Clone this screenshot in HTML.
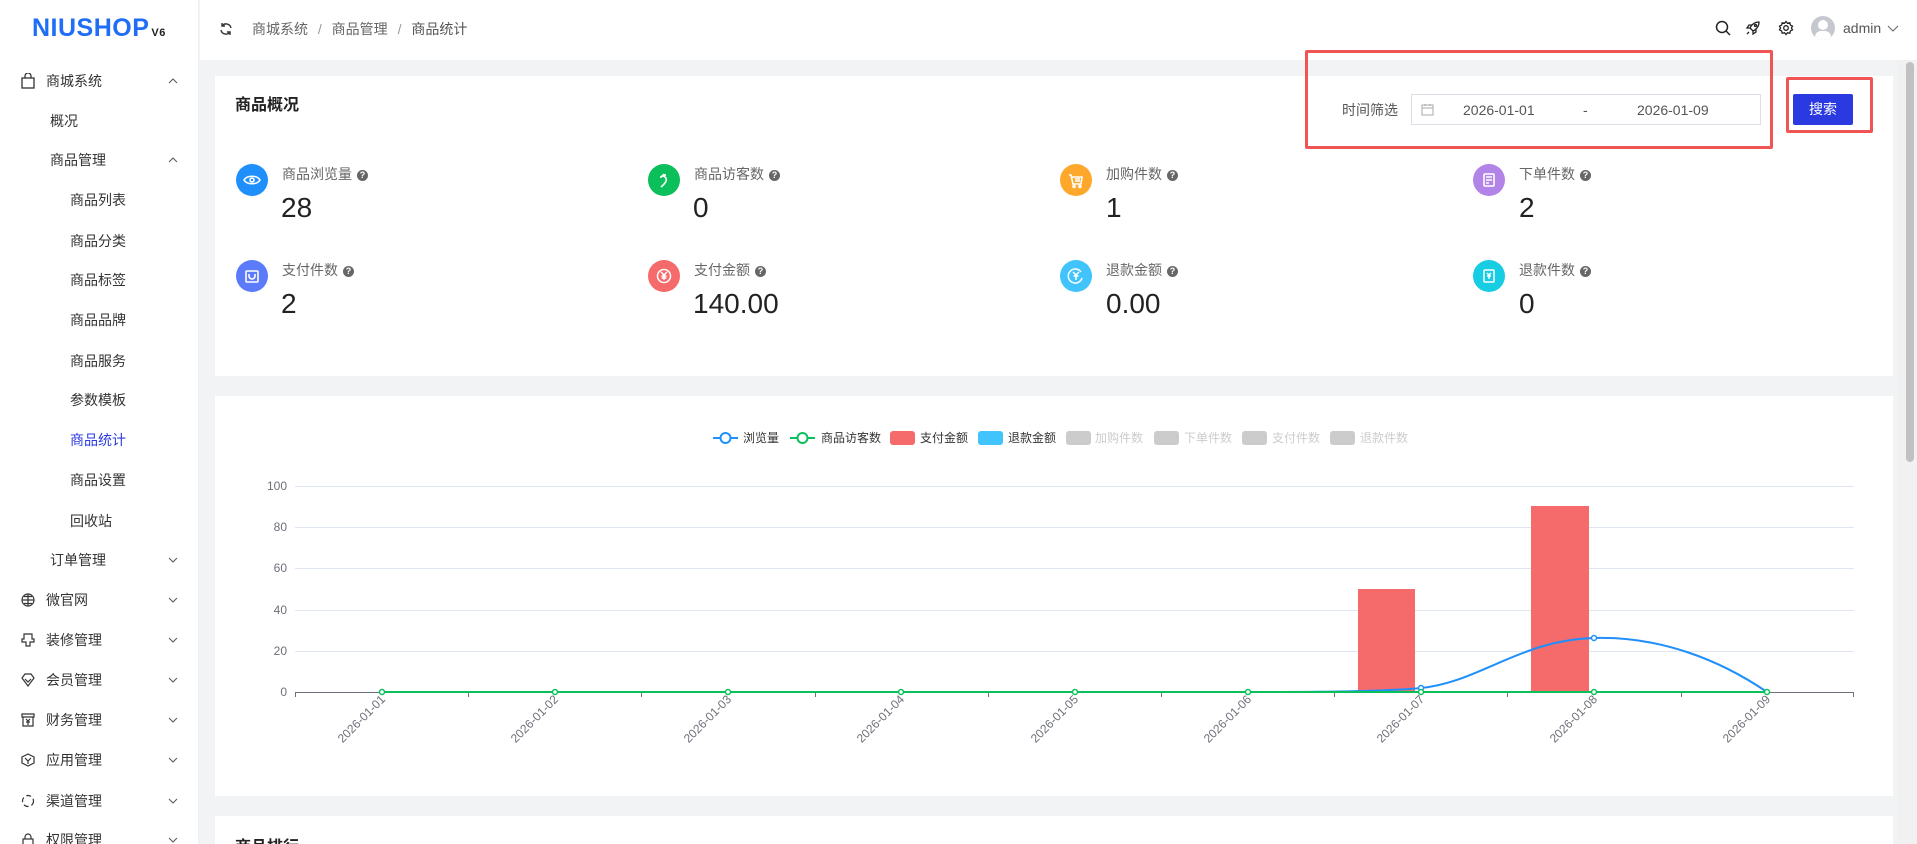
<!DOCTYPE html>
<html style="overflow:hidden"><head><meta charset="utf-8">
<style>
*{margin:0;padding:0;box-sizing:border-box}
html,body{overflow:hidden}
body{width:1917px;height:844px;background:#f2f3f5;font-family:"Liberation Sans","Noto Sans CJK SC",sans-serif;position:relative;color:#333}
.a{position:absolute}
#side{left:0;top:0;width:199px;height:844px;background:#fff;border-right:1px solid #eef0f4}
.logo{left:32px;top:14px;font-size:25px;font-weight:bold;color:#1f6ef5;letter-spacing:0.5px}
.logo small{font-size:11px;color:#222;font-weight:bold;margin-left:2px}
.mi{position:absolute;font-size:14px;color:#333;line-height:20px;white-space:nowrap}
.arr{position:absolute;left:168px;width:10px;height:10px}
#hdr{left:200px;top:0;width:1717px;height:60px;background:#fff}
.card{position:absolute;background:#fff;left:215px;width:1678px}
.lab{font-size:14px;color:#666;line-height:20px;white-space:nowrap}
.q{display:inline-block;width:11px;height:11px;border-radius:50%;background:#666;color:#fff;font-size:9px;line-height:11px;text-align:center;font-weight:bold;margin-left:5px;vertical-align:1px}
.num{font-size:28px;color:#222;line-height:32px}
.ic{position:absolute;width:32px;height:32px;border-radius:50%}
.lg{position:absolute;top:430px;font-size:12px;color:#333;line-height:16px;white-space:nowrap}
.lg.off{color:#ccc}
</style></head><body>
<div id="side" class="a">
<div class="a logo">NIUSHOP<small>V6</small></div>
<svg class="a" style="left:21px;top:73px" width="14" height="16" viewBox="0 0 14 16" fill="none" stroke="#333" stroke-width="1.3"><rect x="1" y="5" width="12" height="10"/><path d="M4 5V3a3 3 0 0 1 6 0v2"/></svg>
<div class="mi" style="left:46px;top:71px">商城系统</div>
<svg class="arr" style="top:76px" viewBox="0 0 10 10"><path d="M1 7l4-4 4 4" fill="none" stroke="#555" stroke-width="1"/></svg>
<div class="mi" style="left:50px;top:111px">概况</div>
<div class="mi" style="left:50px;top:150px">商品管理</div>
<svg class="arr" style="top:155px" viewBox="0 0 10 10"><path d="M1 7l4-4 4 4" fill="none" stroke="#555" stroke-width="1"/></svg>
<div class="mi" style="left:70px;top:190px">商品列表</div>
<div class="mi" style="left:70px;top:231px">商品分类</div>
<div class="mi" style="left:70px;top:270px">商品标签</div>
<div class="mi" style="left:70px;top:310px">商品品牌</div>
<div class="mi" style="left:70px;top:351px">商品服务</div>
<div class="mi" style="left:70px;top:390px">参数模板</div>
<div class="mi" style="left:70px;top:430px;color:#2a3ae0">商品统计</div>
<div class="mi" style="left:70px;top:470px">商品设置</div>
<div class="mi" style="left:70px;top:511px">回收站</div>
<div class="mi" style="left:50px;top:550px">订单管理</div>
<svg class="arr" style="top:555px" viewBox="0 0 10 10"><path d="M1 3l4 4 4-4" fill="none" stroke="#555" stroke-width="1"/></svg>

<svg class="a" style="left:21px;top:593px" width="14" height="14" viewBox="0 0 14 14" fill="none" stroke="#333" stroke-width="1.2"><circle cx="7" cy="7" r="6"/><path d="M1 7h12M7 1v12M3 3.5h8M3 10.5h8"/></svg>
<div class="mi" style="left:46px;top:590px">微官网</div>
<svg class="arr" style="top:595px" viewBox="0 0 10 10"><path d="M1 3l4 4 4-4" fill="none" stroke="#555" stroke-width="1"/></svg>
<svg class="a" style="left:21px;top:633px" width="14" height="14" viewBox="0 0 14 14" fill="none" stroke="#333" stroke-width="1.2"><path d="M3 1h8v5h2v3H9v4H5V9H1V6h2z"/></svg>
<div class="mi" style="left:46px;top:630px">装修管理</div>
<svg class="arr" style="top:635px" viewBox="0 0 10 10"><path d="M1 3l4 4 4-4" fill="none" stroke="#555" stroke-width="1"/></svg>
<svg class="a" style="left:21px;top:673px" width="14" height="14" viewBox="0 0 14 14" fill="none" stroke="#333" stroke-width="1.2"><path d="M1 5l3-4h6l3 4-6 8z"/><path d="M4 6l3 3 3-3"/></svg>
<div class="mi" style="left:46px;top:670px">会员管理</div>
<svg class="arr" style="top:675px" viewBox="0 0 10 10"><path d="M1 3l4 4 4-4" fill="none" stroke="#555" stroke-width="1"/></svg>
<svg class="a" style="left:21px;top:713px" width="14" height="14" viewBox="0 0 14 14" fill="none" stroke="#333" stroke-width="1.2"><path d="M1 1h12v3H1zM2 4v9h10V4M5 6l2 2 2-2M7 8v4M5 9h4"/></svg>
<div class="mi" style="left:46px;top:710px">财务管理</div>
<svg class="arr" style="top:715px" viewBox="0 0 10 10"><path d="M1 3l4 4 4-4" fill="none" stroke="#555" stroke-width="1"/></svg>
<svg class="a" style="left:21px;top:753px" width="14" height="14" viewBox="0 0 14 14" fill="none" stroke="#333" stroke-width="1.2"><path d="M7 1l6 3v6l-6 3-6-3V4z"/><path d="M4 5l3 3 3-3M7 8v3"/></svg>
<div class="mi" style="left:46px;top:750px">应用管理</div>
<svg class="arr" style="top:755px" viewBox="0 0 10 10"><path d="M1 3l4 4 4-4" fill="none" stroke="#555" stroke-width="1"/></svg>
<svg class="a" style="left:21px;top:794px" width="14" height="14" viewBox="0 0 14 14" fill="none" stroke="#333" stroke-width="1.2"><circle cx="7" cy="7" r="5.5" stroke-dasharray="5 3"/></svg>
<div class="mi" style="left:46px;top:791px">渠道管理</div>
<svg class="arr" style="top:796px" viewBox="0 0 10 10"><path d="M1 3l4 4 4-4" fill="none" stroke="#555" stroke-width="1"/></svg>
<svg class="a" style="left:21px;top:833px" width="14" height="14" viewBox="0 0 14 14" fill="none" stroke="#333" stroke-width="1.2"><rect x="2" y="6" width="10" height="7"/><path d="M4 6V4a3 3 0 0 1 6 0v2"/></svg>
<div class="mi" style="left:46px;top:830px">权限管理</div>
<svg class="arr" style="top:835px" viewBox="0 0 10 10"><path d="M1 3l4 4 4-4" fill="none" stroke="#555" stroke-width="1"/></svg>
</div>

<div id="hdr" class="a"></div>
<svg class="a" style="left:219px;top:22px" width="14" height="14" viewBox="0 0 14 14" fill="none" stroke="#333" stroke-width="1.4"><path d="M12 6A5 5 0 0 0 3 4M2 8a5 5 0 0 0 9 2"/><path d="M3 1v3h3M11 13v-3H8"/></svg>
<div class="a" style="left:252px;top:19px;font-size:14px;color:#666;line-height:20px;white-space:nowrap">商城系统 <span style="color:#999;margin:0 6px">/</span> 商品管理 <span style="color:#999;margin:0 6px">/</span> <span style="color:#555">商品统计</span></div>
<svg class="a" style="left:1715px;top:20px" width="16" height="16" viewBox="0 0 16 16" fill="none" stroke="#222" stroke-width="1.5"><circle cx="7" cy="7" r="5.5"/><path d="M11 11l4 4"/></svg>
<svg class="a" style="left:1745px;top:20px" width="16" height="16" viewBox="0 0 16 16" fill="none" stroke="#222" stroke-width="1.3"><path d="M14 2c-4 0-7 2-9 6l3 3c4-2 6-5 6-9zM5 8H2l2-3h3M8 11v3l3-2V9M4 12l-2 2"/><circle cx="10.5" cy="5.5" r="1"/></svg>
<svg class="a" style="left:1778px;top:20px" width="16" height="16" viewBox="0 0 16 16" fill="none" stroke="#222" stroke-width="1.3"><circle cx="8" cy="8" r="2.3"/><path d="M8 1.5l1.5 1.8 2.3-.5.6 2.3 2.1 1L13.4 8l1.1 1.9-2.1 1-.6 2.3-2.3-.5L8 14.5l-1.5-1.8-2.3.5-.6-2.3-2.1-1L2.6 8 1.5 6.1l2.1-1 .6-2.3 2.3.5z"/></svg>
<div class="a" style="left:1811px;top:16px;width:24px;height:24px;border-radius:50%;background:#c5c8ce;overflow:hidden"><div class="a" style="left:7px;top:4px;width:10px;height:10px;border-radius:50%;background:#fff"></div><div class="a" style="left:4px;top:15px;width:16px;height:12px;border-radius:6px 6px 0 0;background:#fff"></div></div>
<div class="a" style="left:1843px;top:18px;font-size:14px;color:#555;line-height:20px">admin</div>
<svg class="a" style="left:1887px;top:23px" width="12" height="10" viewBox="0 0 12 10"><path d="M1 3l5 5 5-5" fill="none" stroke="#666" stroke-width="1"/></svg>
<div class="a" style="left:1897px;top:60px;width:20px;height:784px;background:#f1f1f1"></div>
<div class="a" style="left:1906px;top:62px;width:8px;height:400px;background:#c1c1c1;border-radius:4px"></div>

<!-- card 1 -->
<div class="card" style="top:76px;height:300px"></div>
<div class="a" style="left:235px;top:96px;font-size:16px;font-weight:bold;color:#222;line-height:20px">商品概况</div>
<div class="a lab" style="left:1342px;top:100px;color:#555">时间筛选</div>
<div class="a" style="left:1411px;top:94px;width:350px;height:31px;border:1px solid #dcdfe6;background:#fff"></div>
<svg class="a" style="left:1421px;top:103px" width="13" height="13" viewBox="0 0 13 13" fill="none" stroke="#aaa" stroke-width="1"><rect x="1" y="2" width="11" height="10"/><path d="M1 5h11M4 1v2M9 1v2"/></svg>
<div class="a" style="left:1463px;top:100px;font-size:14px;color:#555;line-height:20px">2026-01-01</div>
<div class="a" style="left:1583px;top:100px;font-size:14px;color:#555;line-height:20px">-</div>
<div class="a" style="left:1637px;top:100px;font-size:14px;color:#555;line-height:20px">2026-01-09</div>
<div class="a" style="left:1793px;top:94px;width:60px;height:31px;background:#2a3ae0;border-radius:2px;color:#fff;font-size:14px;line-height:31px;text-align:center">搜索</div>
<div class="a" style="left:1305px;top:50px;width:468px;height:99px;border:3px solid #f05454;border-radius:2px"></div>
<div class="a" style="left:1786px;top:77px;width:87px;height:56px;border:3px solid #f05454;border-radius:2px"></div>

<!-- stats -->
<div class="ic" style="left:236px;top:164px;background:#1e8ffb"><svg width="32" height="32" viewBox="0 0 32 32" fill="none" stroke="#fff" stroke-width="1.6"><path d="M8 16c3-5 13-5 16 0-3 5-13 5-16 0z"/><circle cx="16" cy="16" r="2"/></svg></div>
<div class="a lab" style="left:282px;top:164px">商品浏览量<span class="q">?</span></div>
<div class="a num" style="left:281px;top:192px">28</div>
<div class="ic" style="left:648px;top:164px;background:#0bc05a"><svg width="32" height="32" viewBox="0 0 32 32" fill="none" stroke="#fff" stroke-width="1.6"><path d="M13 12c4 0 6 2 5 5-1 3-4 5-5 6M13 12v2M15 10l1 2M17 10l0 2"/></svg></div>
<div class="a lab" style="left:694px;top:164px">商品访客数<span class="q">?</span></div>
<div class="a num" style="left:693px;top:192px">0</div>
<div class="ic" style="left:1060px;top:164px;background:#fda82b"><svg width="32" height="32" viewBox="0 0 32 32" fill="none" stroke="#fff" stroke-width="1.6"><path d="M9 11h2l2 9h8l1-7H12M15 15h5M15 17h5"/><circle cx="14" cy="22.5" r="1"/><circle cx="20" cy="22.5" r="1"/></svg></div>
<div class="a lab" style="left:1106px;top:164px">加购件数<span class="q">?</span></div>
<div class="a num" style="left:1106px;top:192px">1</div>
<div class="ic" style="left:1473px;top:164px;background:#b384e8"><svg width="32" height="32" viewBox="0 0 32 32" fill="none" stroke="#fff" stroke-width="1.6"><rect x="11" y="10" width="10" height="12" rx="1"/><path d="M13 13h6M13 16h6M13 19h3"/></svg></div>
<div class="a lab" style="left:1519px;top:164px">下单件数<span class="q">?</span></div>
<div class="a num" style="left:1519px;top:192px">2</div>

<div class="ic" style="left:236px;top:260px;background:#5b7bfb"><svg width="32" height="32" viewBox="0 0 32 32" fill="none" stroke="#fff" stroke-width="1.6"><rect x="10" y="11" width="12" height="11" rx="1"/><path d="M13 14v2a3 3 0 0 0 6 0v-2"/></svg></div>
<div class="a lab" style="left:282px;top:260px">支付件数<span class="q">?</span></div>
<div class="a num" style="left:281px;top:288px">2</div>
<div class="ic" style="left:648px;top:260px;background:#f56b6b"><svg width="32" height="32" viewBox="0 0 32 32" fill="none" stroke="#fff" stroke-width="1.5"><circle cx="16" cy="16" r="6.5"/><path d="M13 12l3 3 3-3M16 15v5M13.5 16h5M13.5 18h5"/></svg></div>
<div class="a lab" style="left:694px;top:260px">支付金额<span class="q">?</span></div>
<div class="a num" style="left:693px;top:288px">140.00</div>
<div class="ic" style="left:1060px;top:260px;background:#41c3fb"><svg width="32" height="32" viewBox="0 0 32 32" fill="none" stroke="#fff" stroke-width="1.5"><path d="M21 12a7 7 0 1 0 1 6"/><path d="M13 12l3 3 3-3M16 15v5M13.5 16h5"/></svg></div>
<div class="a lab" style="left:1106px;top:260px">退款金额<span class="q">?</span></div>
<div class="a num" style="left:1106px;top:288px">0.00</div>
<div class="ic" style="left:1473px;top:260px;background:#16cde3"><svg width="32" height="32" viewBox="0 0 32 32" fill="none" stroke="#fff" stroke-width="1.5"><rect x="11" y="10" width="10" height="12" rx="1"/><path d="M14 13l2 2 2-2M16 15v4M14 16h4"/></svg></div>
<div class="a lab" style="left:1519px;top:260px">退款件数<span class="q">?</span></div>
<div class="a num" style="left:1519px;top:288px">0</div>

<!-- card 2 chart -->
<div class="card" style="top:396px;height:400px"></div>
<svg class="a" style="left:713px;top:431px" width="25" height="14"><path d="M0 7h25" stroke="#1e8ffb" stroke-width="2"/><circle cx="12.5" cy="7" r="5" fill="#fff" stroke="#1e8ffb" stroke-width="2"/></svg>
<div class="lg" style="left:743px">浏览量</div>
<svg class="a" style="left:790px;top:431px" width="25" height="14"><path d="M0 7h25" stroke="#0bc05a" stroke-width="2"/><circle cx="12.5" cy="7" r="5" fill="#fff" stroke="#0bc05a" stroke-width="2"/></svg>
<div class="lg" style="left:821px">商品访客数</div>
<div class="a" style="left:890px;top:431px;width:25px;height:14px;border-radius:3px;background:#f56b6b"></div>
<div class="lg" style="left:920px">支付金额</div>
<div class="a" style="left:978px;top:431px;width:25px;height:14px;border-radius:3px;background:#41c3fb"></div>
<div class="lg" style="left:1008px">退款金额</div>
<div class="a" style="left:1066px;top:431px;width:25px;height:14px;border-radius:3px;background:#ccc"></div>
<div class="lg off" style="left:1095px">加购件数</div>
<div class="a" style="left:1154px;top:431px;width:25px;height:14px;border-radius:3px;background:#ccc"></div>
<div class="lg off" style="left:1184px">下单件数</div>
<div class="a" style="left:1242px;top:431px;width:25px;height:14px;border-radius:3px;background:#ccc"></div>
<div class="lg off" style="left:1272px">支付件数</div>
<div class="a" style="left:1330px;top:431px;width:25px;height:14px;border-radius:3px;background:#ccc"></div>
<div class="lg off" style="left:1360px">退款件数</div>

<svg class="a" style="left:0;top:0" width="1917" height="844" font-family="Liberation Sans, sans-serif" font-size="12">
<g stroke="#e0e6f1" stroke-width="1">
<path d="M295 486.5H1854M295 527.5H1854M295 568.5H1854M295 610.5H1854M295 651.5H1854"/>
</g>
<g fill="#6e7079" text-anchor="end">
<text x="287" y="490">100</text><text x="287" y="531">80</text><text x="287" y="572">60</text><text x="287" y="614">40</text><text x="287" y="655">20</text><text x="287" y="696">0</text>
</g>
<rect x="1358" y="589" width="57" height="103" fill="#f56b6b"/>
<rect x="1531" y="506" width="58" height="186" fill="#f56b6b"/>
<path d="M295 692.5H1854" stroke="#6e7079" stroke-width="1"/>
<g stroke="#6e7079"><path d="M295.5 692v5M468.5 692v5M641.5 692v5M815.5 692v5M988.5 692v5M1161.5 692v5M1334.5 692v5M1507.5 692v5M1681.5 692v5M1853.5 692v5"/></g>
<path d="M382 692H1248C1300 692 1380 692 1421 688C1480 682 1520 640 1594 638C1660 636 1720 660 1767 692" fill="none" stroke="#1e8ffb" stroke-width="2"/>
<circle cx="1421" cy="688" r="2.5" fill="#fff" stroke="#1e8ffb" stroke-width="1.5"/>
<circle cx="1594" cy="638" r="2.5" fill="#fff" stroke="#1e8ffb" stroke-width="1.5"/>
<path d="M382 692H1767" stroke="#0bc05a" stroke-width="2"/>
<g fill="#fff" stroke="#0bc05a" stroke-width="1.5">
<circle cx="382" cy="692" r="2.5"/><circle cx="555" cy="692" r="2.5"/><circle cx="728" cy="692" r="2.5"/><circle cx="901" cy="692" r="2.5"/><circle cx="1075" cy="692" r="2.5"/><circle cx="1248" cy="692" r="2.5"/><circle cx="1421" cy="692" r="2.5"/><circle cx="1594" cy="692" r="2.5"/><circle cx="1767" cy="692" r="2.5"/>
</g>
<g fill="#6e7079" text-anchor="end">
<text transform="translate(386 700) rotate(-45)">2026-01-01</text>
<text transform="translate(559 700) rotate(-45)">2026-01-02</text>
<text transform="translate(732 700) rotate(-45)">2026-01-03</text>
<text transform="translate(905 700) rotate(-45)">2026-01-04</text>
<text transform="translate(1079 700) rotate(-45)">2026-01-05</text>
<text transform="translate(1252 700) rotate(-45)">2026-01-06</text>
<text transform="translate(1425 700) rotate(-45)">2026-01-07</text>
<text transform="translate(1598 700) rotate(-45)">2026-01-08</text>
<text transform="translate(1771 700) rotate(-45)">2026-01-09</text>
</g>
</svg>

<div class="card" style="top:816px;height:28px"></div>
<div class="a" style="left:235px;top:838px;font-size:16px;font-weight:bold;color:#222;line-height:20px">商品排行</div>
</body></html>
